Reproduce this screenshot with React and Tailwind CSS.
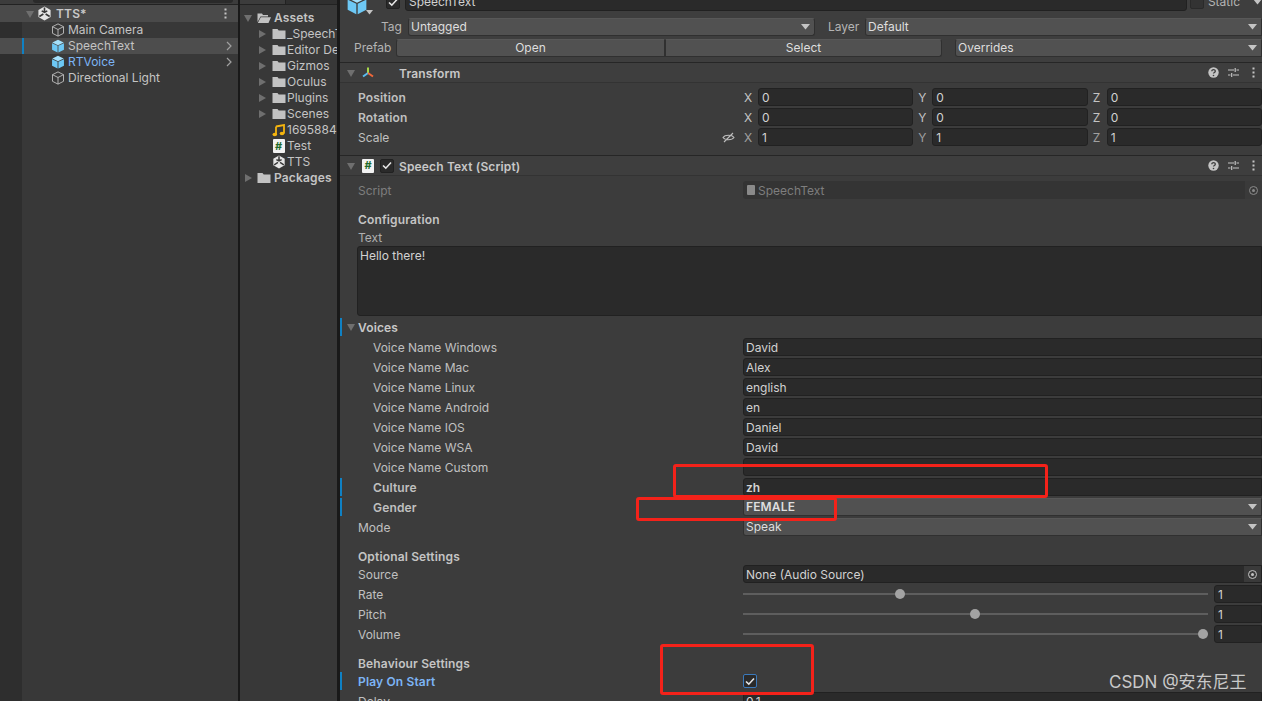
import React from 'react';

const FONT = { fontFamily: 'Inter, "Noto Sans CJK SC", sans-serif' };

const Arrow = ({ open, className = '' }) => (
  <svg width="10" height="10" viewBox="0 0 10 10" className={`shrink-0 ${className}`}>
    {open ? <path d="M1 2h8L5 9z" fill="#6f6f6f" /> : <path d="M2 1v8l7-4z" fill="#6f6f6f" />}
  </svg>
);

const Caret = () => (
  <svg width="9" height="6" viewBox="0 0 9 6" className="shrink-0">
    <path d="M0 0h9L4.500 5.500z" fill="#c4c4c4" />
  </svg>
);

const Cube = ({ filled, size = 16 }) => (
  <svg width={size} height={size} viewBox="0 0 16 16" className="shrink-0">
    {filled ? (
      <>
        <path d="M8 0.800l6.500 3.100L8 7 1.500 3.900z" fill="#a4e0fb" />
        <path d="M1.200 4.800l6.300 3v7.600l-6.300-3.200z" fill="#6dc8f5" />
        <path d="M14.800 4.800l-6.300 3v7.600l6.300-3.200z" fill="#6dc8f5" />
      </>
    ) : (
      <path d="M8 1l6.300 3.200v7.600L8 15l-6.300-3.200V4.200zM1.700 4.200L8 7.400l6.300-3.200M8 7.400V15" fill="none" stroke="#c4c4c4" strokeWidth="1" strokeLinejoin="round" />
    )}
  </svg>
);

const UnityLogo = ({ size = 15 }) => (
  <svg width={size} height={size} viewBox="0 0 16 16" className="shrink-0">
    <path d="M8 0.500l6.500 3.700v7.600L8 15.500l-6.500-3.700V4.200z" fill="#e4e4e4" />
    <path d="M8 1.500v5M2.500 11.200l4.300-2.700M13.500 11.200L9.200 8.500M5 5.200L8 6.700l3-1.500" stroke="#383838" strokeWidth="1.700" fill="none" />
  </svg>
);

const Folder = ({ open }) => (
  <svg width="14" height="12" viewBox="0 0 14 12" className="shrink-0">
    {open ? (
      <path d="M0.500 1.500h4.500l1 1.500h5v1.500H3.500L0.500 10zM3.800 5.200H14L11.500 11H0.800z" fill="#c2c2c2" />
    ) : (
      <path d="M0.500 1h5l1.200 1.500h6.800V11H0.500z" fill="#c2c2c2" />
    )}
  </svg>
);

const ScriptIcon = () => (
  <span className="flex h-[14px] w-[12px] shrink-0 items-center justify-center rounded-[1px] bg-[#f2f2f2] text-[11px] font-bold leading-none text-[#1f6b2c]">
    #
  </span>
);

const Note = () => (
  <svg width="13" height="13" viewBox="0 0 13 13" className="shrink-0">
    <path d="M4 2.500L12 1v8.500" fill="none" stroke="#f5b50f" strokeWidth="1.800" />
    <ellipse cx="2.800" cy="10.500" rx="2.300" ry="1.700" fill="#f5b50f" />
    <ellipse cx="10" cy="9.500" rx="2.300" ry="1.700" fill="#f5b50f" />
    <path d="M4 2.500v8" stroke="#f5b50f" strokeWidth="1.800" />
  </svg>
);

const HelpIcons = () => (
  <div className="flex items-center pr-[3px]">
    <svg width="11" height="11" viewBox="0 0 11 11">
      <circle cx="5.500" cy="5.500" r="5.200" fill="#c4c4c4" />
      <path d="M3.800 4.200c0-2.200 3.500-2.200 3.500 0 0 1.300-1.800 1.200-1.800 2.400" fill="none" stroke="#3e3e3e" strokeWidth="1.300" />
      <circle cx="5.500" cy="8.500" r="0.800" fill="#3e3e3e" />
    </svg>
    <svg width="11" height="11" viewBox="0 0 11 11" className="ml-[9px]">
      <path d="M0 3h6M8.500 3H11M0 8h2.500M5 8h6M7.200 1v4M3.700 6v4" stroke="#c4c4c4" strokeWidth="1.200" fill="none" />
    </svg>
    <svg width="3" height="11" viewBox="0 0 3 11" className="ml-[13px]">
      <path d="M0.500 0.500h2v2h-2zM0.500 4.500h2v2h-2zM0.500 8.500h2v2h-2z" fill="#c4c4c4" />
    </svg>
  </div>
);

const Check = () => (
  <svg width="10" height="9" viewBox="0 0 10 9">
    <path d="M1 4.500L3.800 7.200 9 1.500" fill="none" stroke="#e6e6e6" strokeWidth="1.600" />
  </svg>
);

const CheckBox = ({ blue }) => (
  <span className={`flex h-[14px] w-[14px] shrink-0 items-center justify-center rounded-[2px] border bg-[#2a2a2a] ${blue ? 'border-[#3a79bb]' : 'border-[#212121]'}`}>
    <Check />
  </span>
);

const Field = ({ children, className = '' }) => (
  <div className={`flex h-[18px] min-w-0 items-center rounded-[3px] border border-[#212121] bg-[#2a2a2a] px-[2px] text-[#d2d2d2] ${className}`}>
    {children}
  </div>
);

const Dropdown = ({ children, className = '', bold }) => (
  <div className={`flex h-[18px] min-w-0 items-center justify-between rounded-[3px] border border-[#303030] border-t-[#585858] bg-[#515151] pl-[2px] pr-[4px] leading-none text-[#dedede] ${bold ? 'font-semibold tracking-[0.15px]' : ''} ${className}`}>
    <span>{children}</span>
    <Caret />
  </div>
);

// one inspector line: label column then the value from x=743
const Row = ({ label, bold, indent, mark, blue, children }) => (
  <div className="relative flex h-5 shrink-0 items-center">
    {mark && <div className="absolute bottom-px left-0 top-px w-[2px] bg-[#0f81c4]" />}
    <div className={`w-[403px] shrink-0 ${indent ? 'pl-[33px]' : 'pl-[18px]'} ${bold ? 'font-semibold tracking-[0.15px]' : ''} ${blue ? 'text-[#7cb4f5]' : 'text-[#c0c0c0]'}`}>
      {label}
    </div>
    <div className="flex min-w-0 flex-1 items-center">{children}</div>
  </div>
);

const Axis = ({ axis, value, dim }) => (
  <div className="flex flex-1 items-center">
    <span className={`w-[14px] shrink-0 ${dim ? 'text-[#a0a0a0]' : 'text-[#c4c4c4]'}`}>{axis}</span>
    <Field className="flex-1 pl-[3px]">{value}</Field>
  </div>
);

const Vector = ({ label, bold, vals, link }) => (
  <div className="flex h-5 shrink-0 items-center">
    <div className={`flex w-[404px] shrink-0 items-center justify-between pl-[18px] pr-[9px] text-[#c0c0c0] ${bold ? 'font-semibold tracking-[0.15px]' : ''}`}>
      <span>{label}</span>
      {link && (
        <svg width="13" height="11" viewBox="0 0 13 11">
          <path d="M1 5.500C3 2.500 10 2.500 12 5.500 10 8.500 3 8.500 1 5.500zM2 10L11 1" fill="none" stroke="#bdbdbd" strokeWidth="1.100" />
        </svg>
      )}
    </div>
    <div className="flex flex-1 items-center gap-[5px]">
      <Axis axis="X" value={vals[0]} dim={link} />
      <Axis axis="Y" value={vals[1]} dim={link} />
      <Axis axis="Z" value={vals[2]} dim={link} />
    </div>
  </div>
);

const Slider = ({ pct }) => (
  <>
    <div className="relative h-[2px] w-[465px] shrink-0 bg-[#5e5e5e]">
      <div className="absolute top-[-4px] h-[10px] w-[10px] -translate-x-1/2 rounded-full bg-[#a3a3a3]" style={{ left: `${pct}%` }} />
    </div>
    <Field className="ml-[6px] flex-1 rounded-r-none pl-[3px]">1</Field>
  </>
);

const Section = ({ children, className = '' }) => (
  <div className={`flex shrink-0 items-center pl-[18px] font-semibold tracking-[0.15px] text-[#c4c4c4] ${className}`}>{children}</div>
);

const TransformIcon = () => (
  <svg width="14" height="14" viewBox="0 0 14 14">
    <path d="M7 1.500V7" stroke="#a8d84a" strokeWidth="2" />
    <path d="M7 7L2 10.500" stroke="#58bdf0" strokeWidth="2" />
    <path d="M7 7l5 3.500" stroke="#f0683a" strokeWidth="2" />
  </svg>
);

const hierarchy = [
  { name: 'Main Camera' },
  { name: 'SpeechText', filled: true, sel: true, more: true },
  { name: 'RTVoice', filled: true, blue: true, more: true },
  { name: 'Directional Light' },
];

const assets = [
  { name: '_SpeechText', folder: true },
  { name: 'Editor Default Resources', folder: true },
  { name: 'Gizmos', folder: true },
  { name: 'Oculus', folder: true },
  { name: 'Plugins', folder: true },
  { name: 'Scenes', folder: true },
  { name: '1695884', icon: <Note /> },
  { name: 'Test', icon: <ScriptIcon /> },
  { name: 'TTS', icon: <UnityLogo size={14} /> },
];

const voices = [
  ['Voice Name Windows', 'David'],
  ['Voice Name Mac', 'Alex'],
  ['Voice Name Linux', 'english'],
  ['Voice Name Android', 'en'],
  ['Voice Name IOS', 'Daniel'],
  ['Voice Name WSA', 'David'],
  ['Voice Name Custom', ''],
];

const Hierarchy = () => (
  <div className="flex w-[238px] shrink-0 flex-col bg-[#383838]">
    <div className="flex h-[5px] shrink-0 border-b border-[#222222] bg-[#3c3c3c] pl-[33px] pr-[5px]">
      <div className="h-[3px] w-full rounded-b-[3px] bg-[#2a2a2a]" />
    </div>
    <div className="flex h-[17px] shrink-0 items-center bg-[#4a4a4a] pl-[25px] pr-[11px]">
      <Arrow open />
      <span className="ml-[2px]"><UnityLogo /></span>
      <span className="ml-[4px] flex-1 font-semibold tracking-[0.15px] text-[#c8c8c8]">TTS*</span>
      <svg width="3" height="11" viewBox="0 0 3 11"><path d="M0.500 0.500h2v2h-2zM0.500 4.500h2v2h-2zM0.500 8.500h2v2h-2z" fill="#c4c4c4" /></svg>
    </div>
    <div className="flex flex-1 bg-[linear-gradient(to_right,#2e2e2e_22px,#383838_22px)]">
      <div className="flex w-full flex-col">
        {hierarchy.map(r => (
          <div key={r.name} className={`relative flex h-4 shrink-0 items-center pl-[51px] pr-[6px] ${r.sel ? 'bg-[#4d4d4d]' : ''}`}>
            {r.sel && <div className="absolute bottom-0 left-[22px] top-0 w-[2px] bg-[#0f81c4]" />}
            <Cube filled={r.filled} size={14} />
            <span className={`ml-[3px] flex-1 ${r.blue ? 'text-[#7cb4f5]' : 'text-[#c4c4c4]'}`}>{r.name}</span>
            {r.more && (
              <svg width="6" height="10" viewBox="0 0 6 10"><path d="M1 1l4 4-4 4" fill="none" stroke="#a0a0a0" strokeWidth="1.200" /></svg>
            )}
          </div>
        ))}
      </div>
    </div>
  </div>
);

const Project = () => (
  <div className="flex w-[97px] shrink-0 flex-col overflow-hidden whitespace-nowrap bg-[#383838]">
    <div className="flex h-[5px] shrink-0 border-b border-[#222222] bg-[#3c3c3c]">
      <div className="ml-[45px] h-[4px] w-[55px] border-l border-[#222222] bg-[#2f2f2f]" />
    </div>
    <div className="mt-[5px] flex h-4 shrink-0 items-center pl-[3px]">
      <Arrow open />
      <span className="ml-[4px]"><Folder open /></span>
      <span className="ml-[3px] font-semibold tracking-[0.15px] text-[#c4c4c4]">Assets</span>
    </div>
    {assets.map(a => (
      <div key={a.name} className="flex h-4 shrink-0 items-center pl-[17px]">
        <span className="w-[14px] shrink-0">{a.folder && <Arrow />}</span>
        <span className="flex w-[15px] shrink-0 justify-center">{a.icon || <Folder />}</span>
        <span className="ml-[1px] shrink-0 text-[#c4c4c4]">{a.name}</span>
      </div>
    ))}
    <div className="flex h-4 shrink-0 items-center pl-[3px]">
      <Arrow />
      <span className="ml-[4px]"><Folder /></span>
      <span className="ml-[3px] font-semibold tracking-[0.15px] text-[#c4c4c4]">Packages</span>
    </div>
  </div>
);

const PickerDot = ({ color }) => (
  <span className={`flex h-[9px] w-[9px] items-center justify-center rounded-full border ${color}`}>
    <span className="h-[3px] w-[3px] rounded-full bg-current" />
  </span>
);

const Inspector = () => (
  <div className="flex min-w-0 flex-1 flex-col overflow-hidden whitespace-nowrap bg-[#3c3c3c] leading-[13px]">
    {/* object header, cut off at the top of the window */}
    <div className="h-[62px] shrink-0 bg-[#3e3e3e] leading-none">
      <div className="mt-[-7px] flex h-[18px] items-center">
        <span className="relative ml-[6px] mt-[4px] w-[40px]">
          <Cube filled size={22} />
          <span className="absolute left-[20px] top-[17px]"><svg width="7" height="5" viewBox="0 0 7 5"><path d="M0 0h7L3.500 4.500z" fill="#c4c4c4" /></svg></span>
        </span>
        <CheckBox />
        <Field className="ml-[5px] w-[783px] pl-[3px]">SpeechText</Field>
        <span className="ml-[3px] block h-[14px] w-[14px] rounded-[2px] border border-[#2a2a2a] bg-[#333333]" />
        <span className="ml-[4px] text-[#b4b4b4]">Static</span>
        <span className="ml-[13px]"><Caret /></span>
      </div>
      <div className="mt-[7px] flex h-[18px] items-center">
        <span className="ml-[41px] w-[27px] shrink-0 text-[#b4b4b4]">Tag</span>
        <Dropdown className="w-[407px] shrink-0">Untagged</Dropdown>
        <span className="ml-[13px] w-[37px] shrink-0 text-[#b4b4b4]">Layer</span>
        <Dropdown className="flex-1 rounded-r-none">Default</Dropdown>
      </div>
      <div className="mt-[3px] flex h-[18px] items-center">
        <span className="ml-[14px] w-[42px] shrink-0 text-[#b4b4b4]">Prefab</span>
        <div className="flex h-[18px] w-[269px] shrink-0 items-center justify-center rounded-l-[3px] border border-[#303030] border-t-[#585858] bg-[#515151] text-[#dedede]">Open</div>
        <div className="flex h-[18px] w-[277px] shrink-0 items-center justify-center rounded-r-[3px] border border-[#303030] border-t-[#585858] bg-[#515151] text-[#dedede]">Select</div>
        <Dropdown className="ml-[13px] flex-1 rounded-r-none">Overrides</Dropdown>
      </div>
    </div>

    {/* Transform */}
    <div className="flex h-[21px] shrink-0 items-center border-y border-t-[#262626] border-b-[#333333] bg-[#3e3e3e] pl-[6px] pr-[4px]">
      <Arrow open />
      <span className="ml-[5px] flex w-[14px] shrink-0 justify-center"><TransformIcon /></span>
      <span className="ml-[24px] flex-1 pt-[2px] font-semibold tracking-[0.15px] text-[#c8c8c8]">Transform</span>
      <HelpIcons />
    </div>
    <div className="h-[72px] shrink-0 pt-[4px]">
      <Vector label="Position" bold vals={[0, 0, 0]} />
      <Vector label="Rotation" bold vals={[0, 0, 0]} />
      <Vector label="Scale" vals={[1, 1, 1]} link />
    </div>

    {/* Speech Text (Script) */}
    <div className="flex h-[21px] shrink-0 items-center border-y border-t-[#262626] border-b-[#333333] bg-[#3e3e3e] pl-[6px] pr-[4px]">
      <Arrow open />
      <span className="ml-[5px] flex w-[14px] shrink-0 justify-center"><ScriptIcon /></span>
      <span className="ml-[5px]"><CheckBox /></span>
      <span className="ml-[5px] flex-1 pt-[2px] font-semibold tracking-[0.15px] text-[#c8c8c8]">Speech Text (Script)</span>
      <HelpIcons />
    </div>
    <div className="mt-[5px] flex h-[18px] shrink-0 items-center">
      <div className="w-[403px] shrink-0 pl-[18px] text-[#7e7e7e]">Script</div>
      <div className="flex h-[18px] flex-1 items-center rounded-[3px] bg-[#343434] pl-[4px] text-[#7e7e7e]">
        <span className="h-[10px] w-[8px] rounded-[1px] bg-[#8a8a8a]" />
        <span className="ml-[3px] flex-1">SpeechText</span>
        <span className="flex h-[18px] w-[17px] items-center justify-center bg-[#3a3a3a] text-[#8a8a8a]">
          <PickerDot color="border-[#8a8a8a]" />
        </span>
      </div>
    </div>
    <Section className="mt-[11px] h-[18px]">Configuration</Section>
    <div className="flex h-[18px] shrink-0 items-center pl-[18px] text-[#b0b0b0]">Text</div>
    <div className="ml-[17px] h-[70px] shrink-0 rounded-l-[3px] border border-[#212121] bg-[#2a2a2a] px-[2px] leading-[17px] text-[#d2d2d2]">Hello there!</div>

    <div className="relative mt-[2px] flex h-[18px] shrink-0 items-center pl-[6px]">
      <div className="absolute bottom-0 left-0 top-0 w-[2px] bg-[#0f81c4]" />
      <Arrow open />
      <span className="ml-[2px] font-semibold tracking-[0.15px] text-[#c8c8c8]">Voices</span>
    </div>
    <div className="h-px shrink-0" />
    {voices.map(([k, v]) => (
      <Row key={k} label={k} indent><Field className="flex-1 rounded-r-none">{v}</Field></Row>
    ))}
    <Row label="Culture" indent bold mark><Field className="flex-1 rounded-r-none font-semibold">zh</Field></Row>
    <Row label="Gender" indent bold mark><Dropdown bold className="flex-1 rounded-r-none">FEMALE</Dropdown></Row>
    <Row label="Mode"><Dropdown className="flex-1 rounded-r-none">Speak</Dropdown></Row>

    <Section className="mt-[9px] h-[18px] pt-[2px]">Optional Settings</Section>
    <Row label="Source">
      <div className="flex h-[18px] flex-1 items-center rounded-l-[3px] border border-[#212121] bg-[#2a2a2a] pl-[2px] text-[#d2d2d2]">
        <span className="flex-1">None (Audio Source)</span>
        <span className="flex h-[16px] w-[17px] items-center justify-center bg-[#3a3a3a] text-[#c4c4c4]">
          <PickerDot color="border-[#c4c4c4]" />
        </span>
      </div>
    </Row>
    <Row label="Rate"><Slider pct={33.800} /></Row>
    <Row label="Pitch"><Slider pct={49.900} /></Row>
    <Row label="Volume"><Slider pct={99} /></Row>

    <Section className="mt-[10px] h-[17px] pt-[2px]">Behaviour Settings</Section>
    <Row label="Play On Start" bold blue mark><CheckBox blue /></Row>
    <Row label="Delay"><Field className="flex-1 rounded-r-none">0.1</Field></Row>
  </div>
);

export default function App() {
  return (
    <div className="relative flex h-[701px] w-[1262px] overflow-hidden bg-[#222222] text-[12px] leading-none" style={FONT}>
      <Hierarchy />
      <div className="w-[2px] shrink-0 bg-[#191919]" />
      <Project />
      <div className="w-[3px] shrink-0 bg-[#191919]" />
      <Inspector />

      {/* red annotations drawn over the screenshot */}
      <div className="absolute left-[673px] top-[464px] h-[34px] w-[375px] rounded-[3px] border-[3px] border-[#f4221a]" />
      <div className="absolute left-[636px] top-[497px] h-[24px] w-[201px] rounded-[3px] border-[3px] border-[#f4221a]" />
      <div className="absolute left-[660px] top-[644px] h-[51px] w-[154px] rounded-[3px] border-[3px] border-[#f4221a]" />
      <span className="absolute left-[1109px] top-[672px] text-[17px] leading-[20px] text-[#c9c9c9]">CSDN @安东尼王</span>
    </div>
  );
}
